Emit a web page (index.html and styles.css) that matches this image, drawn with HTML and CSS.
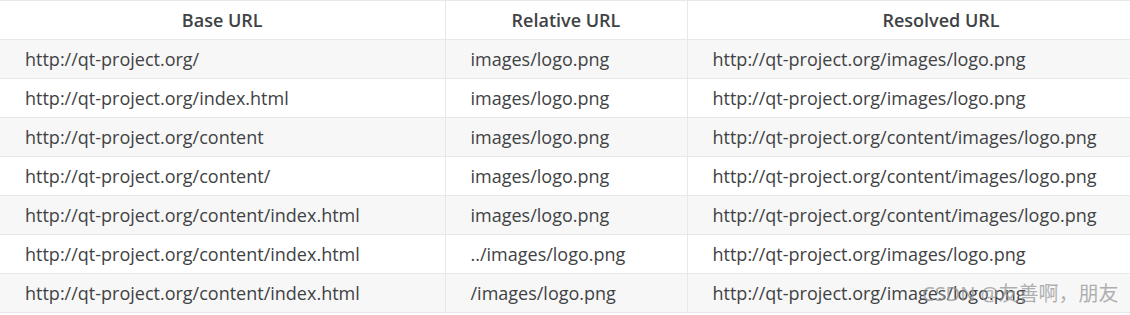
FILE: index.html
```html
<!DOCTYPE html>
<html>
<head>
<meta charset="utf-8">
<link rel="stylesheet" href="styles.css">
</head>
<body>
<div class="wrap">
<table class="urls">
  <thead>
    <tr><th class="c1">Base URL</th><th class="c2">Relative URL</th><th class="c3">Resolved URL</th></tr>
  </thead>
  <tbody>
    <tr><td>http://qt-project.org/</td><td>images/logo.png</td><td>http://qt-project.org/images/logo.png</td></tr>
    <tr><td>http://qt-project.org/index.html</td><td>images/logo.png</td><td>http://qt-project.org/images/logo.png</td></tr>
    <tr><td>http://qt-project.org/content</td><td>images/logo.png</td><td>http://qt-project.org/content/images/logo.png</td></tr>
    <tr><td>http://qt-project.org/content/</td><td>images/logo.png</td><td>http://qt-project.org/content/images/logo.png</td></tr>
    <tr><td>http://qt-project.org/content/index.html</td><td>images/logo.png</td><td>http://qt-project.org/content/images/logo.png</td></tr>
    <tr><td>http://qt-project.org/content/index.html</td><td>../images/logo.png</td><td>http://qt-project.org/images/logo.png</td></tr>
    <tr><td>http://qt-project.org/content/index.html</td><td>/images/logo.png</td><td>http://qt-project.org/images/logo.png</td></tr>
  </tbody>
</table>
<div class="watermark">CSDN @友善啊，朋友</div>
</div>
</body>
</html>
```
FILE: styles.css
```css
html, body {
  margin: 0;
  padding: 0;
  background: #ffffff;
  overflow: hidden;
}
.wrap {
  position: relative;
  width: 1130px;
  height: 315px;
  overflow: hidden;
}
.urls {
  border-collapse: collapse;
  table-layout: fixed;
  width: 1195px;
  font-family: "Open Sans", "Noto Sans", sans-serif;
  font-size: 18px;
  color: #404244;
}
.urls th, .urls td {
  height: 39px;
  padding: 0 0 0 25px;
  border: 1px solid #e8e8e8;
  text-align: left;
  vertical-align: middle;
  white-space: nowrap;
  box-sizing: border-box;
}
.urls th {
  text-align: center;
  padding: 0;
  font-weight: 600;
  background: #ffffff;
}
.urls th:first-child, .urls td:first-child { border-left: none; }
.c1 { width: 445px; }
.c2 { width: 242px; }
.c3 { width: 508px; }
.urls tbody tr:nth-child(odd) td { background: #f7f7f7; }
.urls tbody tr:nth-child(even) td { background: #ffffff; }
.watermark {
  position: absolute;
  left: 922px;
  top: 278px;
  font-family: "Noto Sans", "Noto Sans CJK SC", sans-serif;
  font-size: 20px;
  color: rgba(150, 150, 150, 0.75);
  white-space: nowrap;
}
```
